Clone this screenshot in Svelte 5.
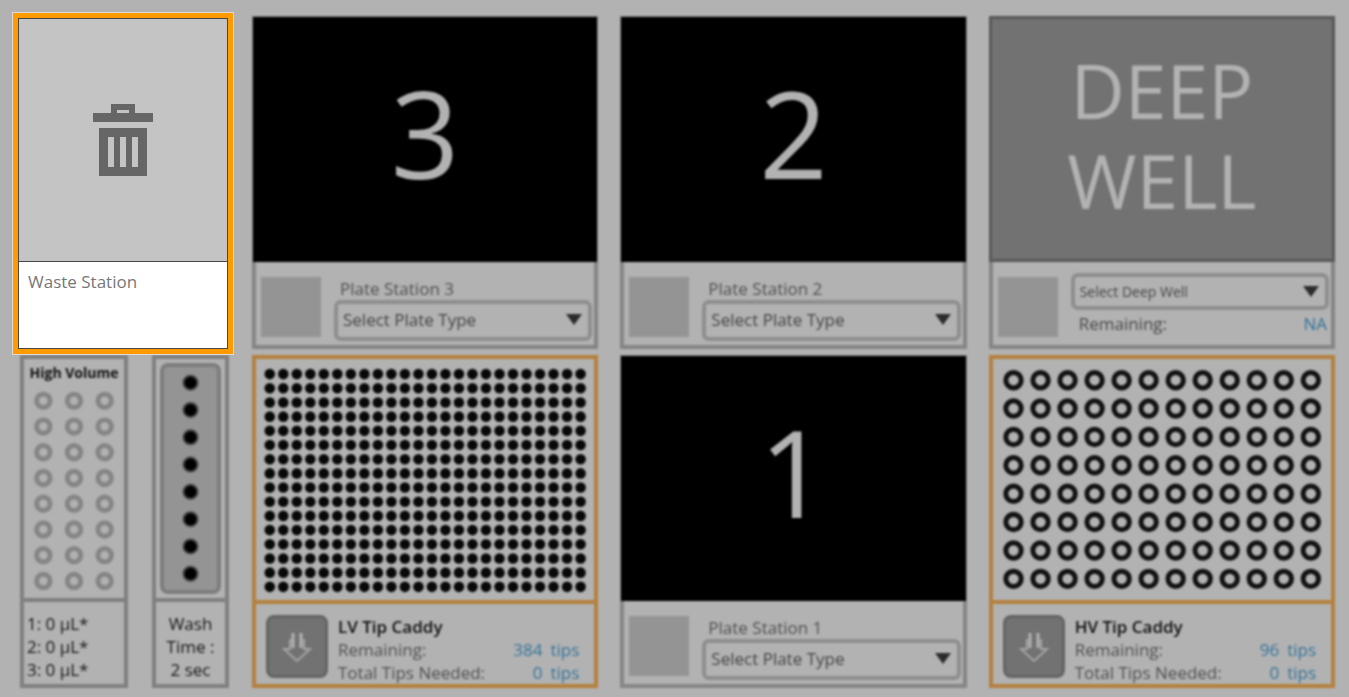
<script lang="ts">
  type Station = { id: number; type: string }
  type Caddy = { name: string; kind: 'lv' | 'hv'; remaining: number; needed: number }

  const stations: Record<number, Station> = $state({
    1: { id: 1, type: '' },
    2: { id: 2, type: '' },
    3: { id: 3, type: '' },
  })

  const lv: Caddy = { name: 'LV Tip Caddy', kind: 'lv', remaining: 384, needed: 0 }
  const hv: Caddy = { name: 'HV Tip Caddy', kind: 'hv', remaining: 96, needed: 0 }

  const volumes = [0, 0, 0]
  let deepWell = $state('')

  const range = (n: number) => Array.from({ length: n }, (_, i) => i)
</script>

{#snippet wells(cols: number, rows: number, dx: number, dy: number, r: number, kind: string)}
  <svg class="wells {kind}" viewBox="0 0 {cols * dx} {rows * dy}" aria-hidden="true">
    {#each range(rows) as row}
      {#each range(cols) as col}
        <circle cx={(col + 0.5) * dx} cy={(row + 0.5) * dy} {r} />
      {/each}
    {/each}
  </svg>
{/snippet}

{#snippet caret()}
  <svg class="caret" viewBox="0 0 16 11" aria-hidden="true"><path d="M0 0h16L8 11z" /></svg>
{/snippet}

{#snippet plate(station: Station)}
  <section class="panel soft">
    <div class="visual black"><span class="digit">{station.id}</span></div>
    <div class="body">
      <div class="thumb"></div>
      <div class="fields">
        <label class="name" for="plate-{station.id}">Plate Station {station.id}</label>
        <div class="picker">
          <select id="plate-{station.id}" bind:value={station.type}>
            <option value="">Select Plate Type</option>
          </select>
          {@render caret()}
        </div>
      </div>
    </div>
  </section>
{/snippet}

{#snippet caddy(c: Caddy)}
  <section class="panel soft caddy">
    <div class="visual">
      {#if c.kind === 'lv'}
        {@render wells(24, 16, 13.5, 14.17, 5.3, 'dots')}
      {:else}
        {@render wells(12, 8, 27, 28.35, 7.7, 'rings')}
      {/if}
    </div>
    <div class="body">
      <button class="load" aria-label="Load {c.name}">
        <svg viewBox="0 0 32 32" aria-hidden="true">
          <path class="prong" d="M12 2v15M20 2v15" />
          <path d="M9 8v10H3l13 12 13-12h-6V8" />
        </svg>
      </button>
      <div class="tips">
        <strong>{c.name}</strong>
        <div class="row"><span>Remaining:</span><span class="value"><b>{c.remaining}</b><b>tips</b></span></div>
        <div class="row"><span>Total Tips Needed:</span><span class="value"><b>{c.needed}</b><b>tips</b></span></div>
      </div>
    </div>
  </section>
{/snippet}

<main class="deck">
  <section class="waste">
    <div class="bin">
      <svg viewBox="0 0 60 72" aria-hidden="true">
        <path fill-rule="evenodd" d="M18 0h24v9h18v9H0V9h18zM24 6v3h12V6z" />
        <path fill-rule="evenodd" d="M6 24h48v48H6zM15 33v30h6V33zM27 33v30h6V33zM39 33v30h6V33z" />
      </svg>
    </div>
    <div class="waste-name">Waste Station</div>
  </section>

  {@render plate(stations[3])}
  {@render plate(stations[2])}

  <section class="panel soft">
    <div class="visual deep"><div>DEEP</div><div>WELL</div></div>
    <div class="body">
      <div class="thumb"></div>
      <div class="fields deep-fields">
        <div class="picker small">
          <select aria-label="Deep well" bind:value={deepWell}>
            <option value="">Select Deep Well</option>
          </select>
          {@render caret()}
        </div>
        <div class="row"><span>Remaining:</span><span class="value">NA</span></div>
      </div>
    </div>
  </section>

  <div class="side soft">
    <section class="narrow volume">
      <div class="top">
        <h2>High Volume</h2>
        {@render wells(3, 8, 31, 26, 6.8, 'pale')}
      </div>
      <div class="notes">
        {#each volumes as v, i}
          <div>{i + 1}: {v} µL*</div>
        {/each}
      </div>
    </section>
    <section class="narrow wash">
      <div class="top">
        <div class="tray">{@render wells(1, 8, 27, 27.3, 7, 'ports')}</div>
      </div>
      <div class="notes centered">
        <div>Wash</div>
        <div>Time :</div>
        <div>2 sec</div>
      </div>
    </section>
  </div>

  {@render caddy(lv)}
  {@render plate(stations[1])}
  {@render caddy(hv)}
</main>

<style>
  :global(body) {
    margin: 0;
    background: #b2b2b2;
  }
  .deck {
    --line: #858585;
    --orange: #b5803f;
    display: grid;
    grid-template-columns: 212px repeat(3, minmax(0, 1fr));
    gap: 6px 22px;
    padding: 16px 14px 9px 18px;
    background: #b2b2b2;
    color: #484848;
    font-family: 'Open Sans', 'Noto Sans', sans-serif;
    font-size: 17px;
    line-height: 23px;
  }
  .deck * {
    box-sizing: border-box;
  }
  /* everything but the active station sits out of focus */
  .soft {
    filter: blur(1px);
  }
  svg {
    display: block;
  }

  .waste {
    display: flex;
    flex-direction: column;
    margin: 2px 2px 0 0;
    border: 1px solid #484848;
    outline: 5px solid #ff9b00;
    box-shadow: 0 0 0 6px #dcdcdc;
    background: #fff;
    z-index: 1;
  }
  .bin {
    display: flex;
    align-items: center;
    justify-content: center;
    height: 243px;
    border-bottom: 1px solid #484848;
    background: #c4c4c4;
  }
  .bin svg {
    width: 60px;
    height: 72px;
    fill: #666;
  }
  .waste-name {
    padding: 8px 9px;
    color: #777;
  }

  .panel {
    display: flex;
    flex-direction: column;
    min-width: 0;
  }
  .visual {
    display: flex;
    flex-direction: column;
    align-items: center;
    justify-content: center;
    height: 246px;
  }
  .black {
    padding-bottom: 14px;
    border: solid #808080;
    border-width: 1px 1px 0;
    background: #000;
  }
  .digit {
    color: #b2b2b2;
    font-size: 120px;
    line-height: 120px;
  }
  .deep {
    padding-bottom: 9px;
    border: 3px solid #585858;
    background: #727272;
    color: #b2b2b2;
    font-size: 75px;
    line-height: 90px;
  }
  .body {
    display: flex;
    height: 87px;
    padding: 15px 2px 0 5px;
    border: solid var(--line);
    border-width: 0 4px 4px;
  }
  .thumb {
    flex: none;
    width: 60px;
    height: 60px;
    background: #949494;
  }
  .fields {
    flex: 1;
    min-width: 0;
    padding-left: 13px;
  }
  .name {
    display: block;
    padding-left: 6px;
    color: #505050;
  }
  .picker {
    position: relative;
  }
  select {
    display: block;
    width: 100%;
    height: 41px;
    padding: 0 28px 3px 5px;
    border: 4px solid #8e8e8e;
    border-radius: 7px;
    appearance: none;
    background: none;
    color: #444;
    font: inherit;
  }
  .caret {
    position: absolute;
    top: 14px;
    right: 10px;
    width: 16px;
    height: 11px;
    fill: #2c2c2c;
    pointer-events: none;
  }
  .small select {
    height: 37px;
    padding-bottom: 0;
    font-size: 14px;
  }
  .small .caret {
    top: 13px;
  }
  .deep-fields {
    margin-top: -4px;
  }
  .row {
    display: flex;
    justify-content: space-between;
  }
  .deep-fields .row {
    padding: 2px 2px 0 8px;
  }
  .value {
    display: flex;
    gap: 8px;
    color: #33749a;
  }
  .value b {
    font-weight: 400;
  }

  .caddy .visual {
    height: 249px;
    padding: 1px 7px 0;
    border: 4px solid var(--orange);
  }
  .caddy .body {
    height: 84px;
    padding: 11px 15px 0 10px;
    border-color: var(--orange);
  }
  .load {
    display: flex;
    align-items: center;
    justify-content: center;
    flex: none;
    width: 62px;
    height: 63px;
    padding: 0;
    border: 3px solid #646464;
    border-radius: 8px;
    background: #727272;
  }
  .load svg {
    width: 32px;
    height: 32px;
    fill: none;
    stroke: #a4a4a4;
    stroke-width: 2;
  }
  .load .prong {
    stroke: #b2b2b2;
    stroke-width: 3;
  }
  .tips {
    flex: 1;
    padding-left: 10px;
    color: #505050;
    white-space: nowrap;
  }
  .tips strong {
    display: block;
    color: #111;
    font-weight: 600;
  }

  .wells {
    width: 100%;
    fill: none;
  }
  .dots {
    fill: #080808;
  }
  .rings {
    stroke: #121212;
    stroke-width: 5;
  }
  .pale {
    stroke: #858585;
    stroke-width: 5;
  }
  .ports {
    fill: #000;
    stroke: #444;
    stroke-width: 2;
  }

  .side {
    display: flex;
    gap: 24px;
    padding: 0 1px 0 2px;
  }
  .narrow {
    display: flex;
    flex-direction: column;
    border: 4px solid #808080;
  }
  .volume {
    flex: 1;
  }
  .wash {
    width: 77px;
  }
  .top {
    height: 243px;
    padding: 4px;
    border-bottom: 4px solid #808080;
  }
  h2 {
    margin: 0 0 5px;
    color: #111;
    font-size: 14px;
    font-weight: 700;
    line-height: 20px;
    text-align: center;
    white-space: nowrap;
  }
  .tray {
    height: 231px;
    padding: 2px 13px;
    border: 4px solid #7d7d7d;
    border-radius: 8px;
    background: #949494;
  }
  .notes {
    padding: 10px 3px 0;
    color: #161616;
  }
  .centered {
    padding: 10px 0 0;
    text-align: center;
  }
</style>
